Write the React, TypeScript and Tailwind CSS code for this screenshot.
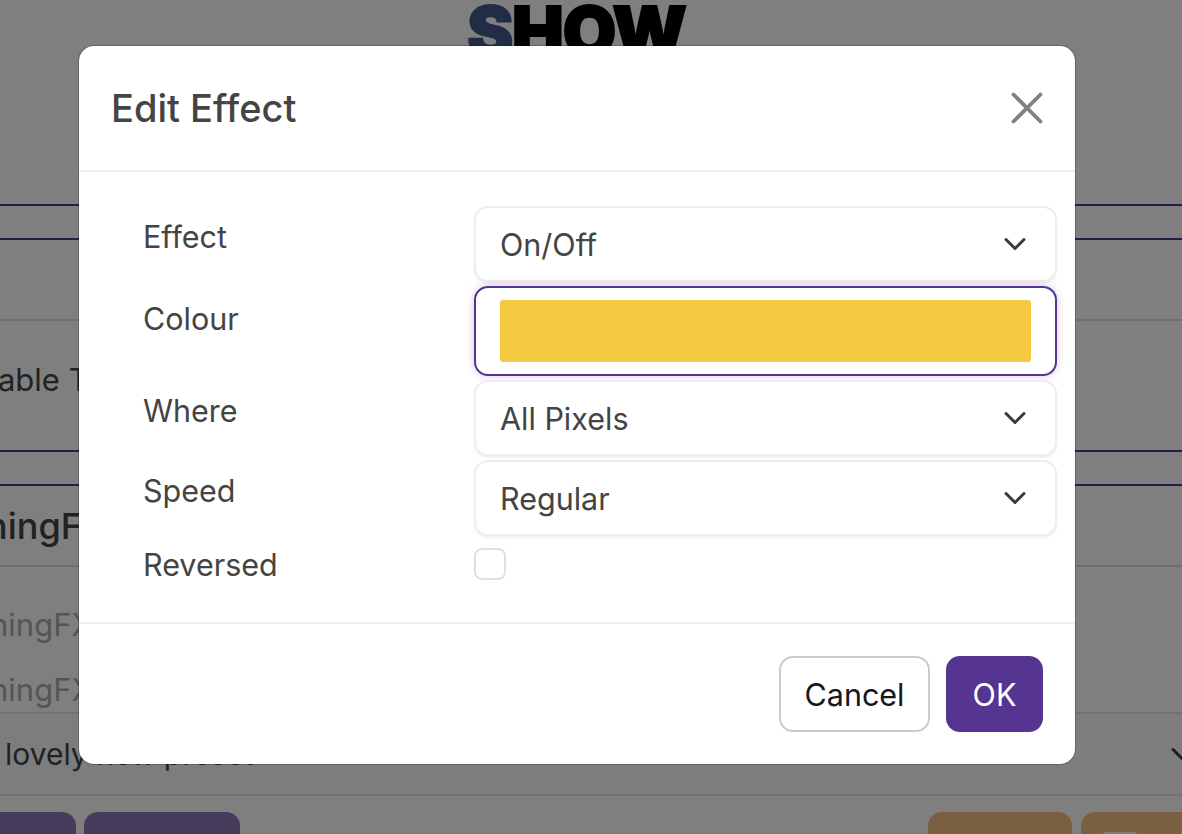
import { ChevronDown, X } from "lucide-react";

// Select-like field used in the effect form
const SelectField = ({ value }: { value: string }) => (
  <div className="flex h-[76px] items-center justify-between rounded-[14px] border-2 border-[#eeeef0] bg-white pr-[22px] pl-[24px] text-[30.5px] shadow-[0_2px_2px_rgba(86,52,145,0.08)]">
    <span className="pt-[1px]">{value}</span>
    <ChevronDown className="h-[36px] w-[36px] text-[#343a40]" strokeWidth={2} />
  </div>
);

export default function App() {
  return (
    <div className="relative h-[834px] w-[1182px] overflow-hidden bg-white font-['Inter',sans-serif] text-[#444444]">
      {/* Page behind the dialog */}
      <div className="flex h-full flex-col">
        <div className="flex h-[204px] shrink-0 justify-center overflow-hidden pr-[29px]">
          <div className="-mt-[8px] text-[69px] leading-[1.15] font-black tracking-[-1px] text-black [-webkit-text-stroke:2px_currentColor]">
            <span className="text-[#42588f]">S</span>HOW
          </div>
        </div>
        <div className="h-[36px] shrink-0 border-y-2 border-[#563491]" />
        <div className="h-[81px] shrink-0 border-b-2 border-[#dcdcdc]" />
        <div className="flex h-[129px] shrink-0 items-center overflow-hidden pb-[10px] text-[31px] whitespace-nowrap">
          <span className="-ml-[39px]">Enable T</span>
        </div>
        <div className="h-[36px] shrink-0 border-y-2 border-[#563491]" />
        <div className="flex h-[81px] shrink-0 items-center overflow-hidden border-b-2 border-[#dcdcdc] text-[36px] font-medium whitespace-nowrap">
          <span className="-ml-[14px]">ningFX</span>
        </div>
        <div className="flex h-[145px] shrink-0 flex-col overflow-hidden pt-[39px] text-[31px] leading-[38px] whitespace-nowrap text-[#aaaaaa]">
          <span className="-ml-[10px] h-[65px]">ningFX</span>
          <span className="-ml-[10px]">ningFX</span>
        </div>
        <div className="flex h-[84px] shrink-0 items-center justify-between border-y-2 border-[#e4e4e6] bg-[#fbfbfd] pl-[5px] text-[30px] whitespace-nowrap">
          <span>lovely new preset</span>
          <ChevronDown className="-mr-[18px] h-[36px] w-[36px] text-[#343a40]" strokeWidth={2} />
        </div>
        <div className="flex shrink-0 justify-between pt-[16px]">
          <div className="flex gap-[8px]">
            <div className="h-[60px] w-[76px] rounded-tr-[14px] bg-[#9078b8]" />
            <div className="h-[60px] w-[156px] rounded-t-[14px] bg-[#9078b8]" />
          </div>
          <div className="flex gap-[9px]">
            <div className="h-[60px] w-[144px] rounded-t-[14px] bg-[#f0c080]" />
            <div className="h-[60px] w-[101px] rounded-tl-[14px] bg-[#f0c080] pt-[20px] pl-[22px]">
              <div className="h-[8px] w-[34px] rounded-t-[3px] bg-[#ffffff]" />
            </div>
          </div>
        </div>
      </div>

      {/* Backdrop */}
      <div className="absolute inset-0 bg-black/50" />

      {/* Dialog */}
      <div className="absolute top-[45px] left-[78px] flex h-[720px] w-[998px] flex-col rounded-[16px] border border-black/20 bg-white bg-clip-padding">
        <div className="flex h-[126px] shrink-0 items-center justify-between border-b-2 border-[#eeeef0] pr-[21px] pl-[32px]">
          <h5 className="text-[38px] leading-none font-medium">Edit Effect</h5>
          <X className="h-[54px] w-[54px] text-[#808080]" strokeWidth={1.7} />
        </div>

        <div className="grid flex-1 grid-cols-[331px_583px] content-start pt-[34px] pl-[64px] text-[30.5px]">
          <label className="h-[80px] pt-[9px] leading-[44px]">Effect</label>
          <div className="h-[80px]">
            <SelectField value="On/Off" />
          </div>

          <label className="h-[94px] pt-[11px] leading-[44px]">Colour</label>
          <div className="h-[94px]">
            <div className="h-[90px] rounded-[14px] border-2 border-[#563491] bg-white px-[24px] py-[12px] shadow-[0_0_8px_rgba(86,52,145,0.25)]">
              <div className="h-[62px] rounded-[3px] bg-[#f5c842]" />
            </div>
          </div>

          <label className="h-[80px] pt-[9px] leading-[44px]">Where</label>
          <div className="h-[80px]">
            <SelectField value="All Pixels" />
          </div>

          <label className="h-[88px] pt-[9px] leading-[44px]">Speed</label>
          <div className="h-[88px]">
            <SelectField value="Regular" />
          </div>

          <label className="-mt-[5px] leading-[44px]">Reversed</label>
          <div>
            <input
              type="checkbox"
              className="block h-[32px] w-[32px] appearance-none rounded-[8px] border-2 border-[#e0e0e2] bg-white"
            />
          </div>
        </div>

        <div className="flex h-[142px] shrink-0 items-start justify-end gap-[16px] border-t-2 border-[#eeeef0] pt-[32px] pr-[32px] text-[30.5px]">
          <button className="h-[76px] w-[151px] rounded-[14px] border-2 border-[#cccccc] bg-white pt-[1px] text-[#16161d]">
            Cancel
          </button>
          <button className="h-[76px] w-[97px] rounded-[14px] bg-[#563491] pt-[1px] text-white">OK</button>
        </div>
      </div>
    </div>
  );
}
